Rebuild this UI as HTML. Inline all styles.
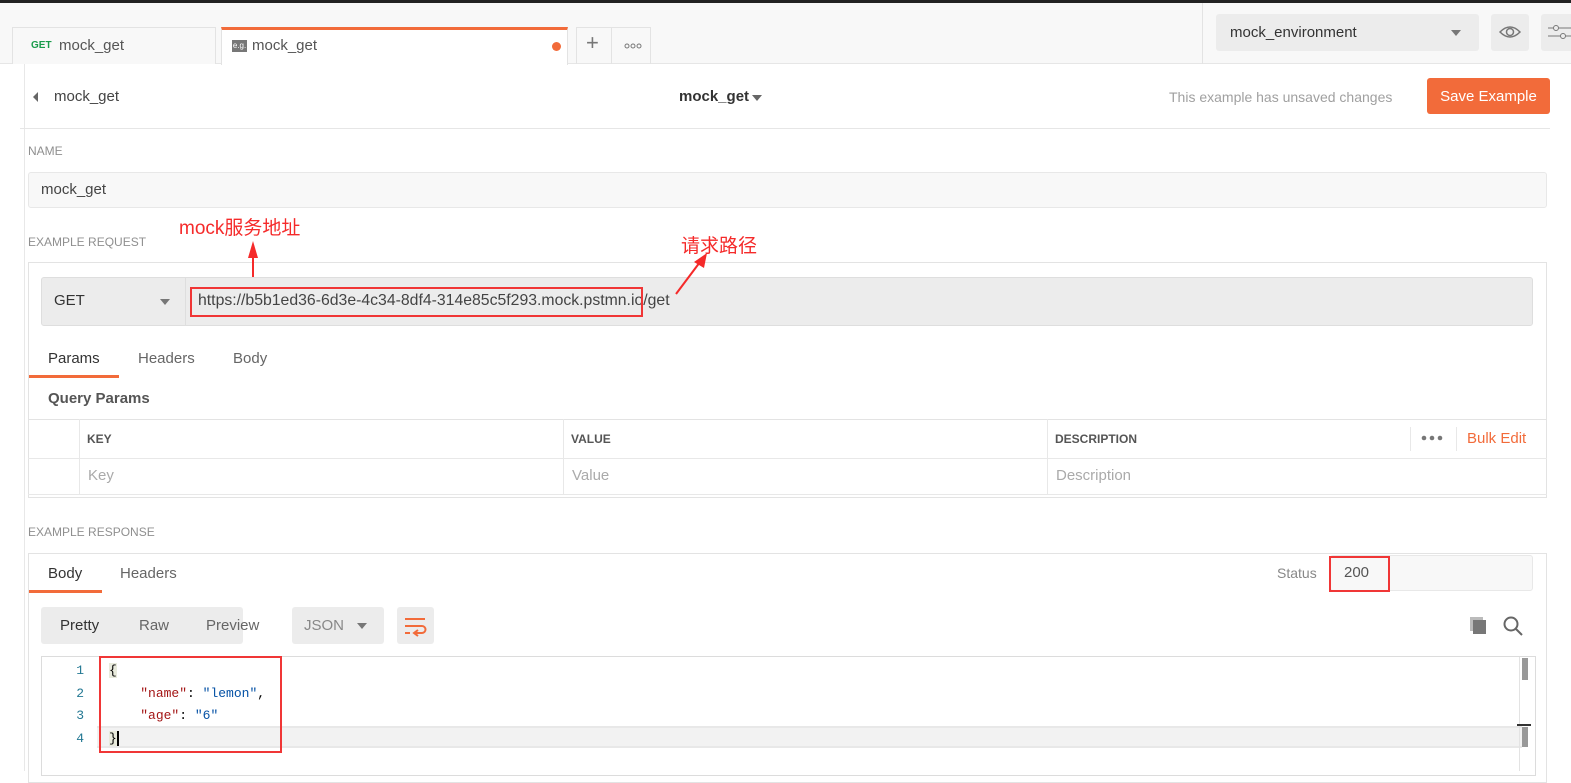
<!DOCTYPE html>
<html><head><meta charset="utf-8"><style>
*{margin:0;padding:0;box-sizing:border-box}
body{width:1571px;height:771px;position:relative;overflow:hidden;background:#fff;font-family:"Liberation Sans","Noto Sans CJK SC",sans-serif;font-size:15px;color:#505050}
.a{position:absolute}
.lbl{font-size:12px;color:#8f8f8f}
.red{border:2px solid #f03636}
.mono{font-family:"Liberation Mono",monospace;font-size:13px}
</style></head><body>
<div class="a" style="left:0;top:0;width:1571px;height:3px;background:#222"></div>
<div class="a" style="left:0;top:3px;width:1571px;height:61px;background:#f8f8f8;border-bottom:1px solid #e6e6e6"></div>
<div class="a" style="left:12px;top:27px;width:204px;height:37px;border:1px solid #e3e3e3;border-bottom:none;background:#f8f8f8"></div>
<div class="a" style="left:31px;top:40px;font-size:10px;font-weight:bold;color:#1a9b4b">GET</div>
<div class="a" style="left:59px;top:37px;font-size:15px;color:#555">mock_get</div>
<div class="a" style="left:221px;top:27px;width:347px;height:38px;background:#fff;border:1px solid #e3e3e3;border-top:3px solid #f26b3a;border-bottom:none"></div>
<div class="a" style="left:232px;top:40px;width:15px;height:12px;background:#777;color:#fff;font-size:8px;line-height:12px;text-align:center">e.g.</div>
<div class="a" style="left:252px;top:37px;font-size:15px;color:#555">mock_get</div>
<div class="a" style="left:552px;top:42px;width:9px;height:9px;border-radius:50%;background:#f26b3a"></div>
<div class="a" style="left:576px;top:27px;width:75px;height:37px;border:1px solid #e3e3e3;border-bottom:none"></div>
<div class="a" style="left:611px;top:27px;width:1px;height:37px;background:#e3e3e3"></div>
<div class="a" style="left:586px;top:30px;font-size:22px;color:#777">+</div>
<svg class="a" style="left:624px;top:43px" width="18" height="6"><circle cx="3" cy="3" r="2" fill="none" stroke="#777"/><circle cx="9" cy="3" r="2" fill="none" stroke="#777"/><circle cx="15" cy="3" r="2" fill="none" stroke="#777"/></svg>
<div class="a" style="left:1202px;top:3px;width:1px;height:61px;background:#e3e3e3"></div>
<div class="a" style="left:1216px;top:14px;width:263px;height:37px;background:#ececec;border-radius:3px"></div>
<div class="a" style="left:1230px;top:24px;font-size:15px;color:#333">mock_environment</div>
<div class="a" style="left:1451px;top:30px;border-left:5px solid transparent;border-right:5px solid transparent;border-top:6px solid #777"></div>
<div class="a" style="left:1491px;top:14px;width:38px;height:37px;background:#ececec;border-radius:3px"></div>
<svg class="a" style="left:1498px;top:22px" width="24" height="20"><path d="M2 10 Q12 0 22 10 Q12 20 2 10Z" fill="none" stroke="#777" stroke-width="1.5"/><circle cx="12" cy="10" r="3.5" fill="none" stroke="#777" stroke-width="1.5"/></svg>
<div class="a" style="left:1541px;top:14px;width:40px;height:37px;background:#ececec;border-radius:3px"></div>
<svg class="a" style="left:1548px;top:22px" width="23" height="20"><path d="M0 6H23M0 14H23" stroke="#777"/><circle cx="8" cy="6" r="2.5" fill="#ececec" stroke="#777"/><circle cx="15" cy="14" r="2.5" fill="#ececec" stroke="#777"/></svg>

<div class="a" style="left:24px;top:64px;width:1px;height:707px;background:#e8e8e8"></div>
<div class="a" style="left:33px;top:92px;border-top:5px solid transparent;border-bottom:5px solid transparent;border-right:5px solid #666"></div>
<div class="a" style="left:54px;top:88px;color:#444">mock_get</div>
<div class="a" style="left:679px;top:88px;color:#333;font-weight:bold">mock_get</div>
<div class="a" style="left:752px;top:95px;border-left:5px solid transparent;border-right:5px solid transparent;border-top:6px solid #666"></div>
<div class="a" style="left:1169px;top:89px;font-size:14px;color:#a0a0a0">This example has unsaved changes</div>
<div class="a" style="left:1427px;top:78px;width:123px;height:36px;background:#f26b3a;border-radius:3px;color:#fff;font-size:15px;display:flex;align-items:center;justify-content:center">Save Example</div>
<div class="a" style="left:20px;top:128px;width:1530px;height:1px;background:#e6e6e6"></div>

<div class="a lbl" style="left:28px;top:144px">NAME</div>
<div class="a" style="left:28px;top:172px;width:1519px;height:36px;background:#f8f8f8;border:1px solid #e8e8e8;border-radius:3px"></div>
<div class="a" style="left:41px;top:181px;color:#444">mock_get</div>
<div class="a lbl" style="left:28px;top:235px">EXAMPLE REQUEST</div>
<div class="a" style="left:179px;top:213px;font-size:19px;color:#f52a2a">mock服务地址</div>
<div class="a" style="left:681px;top:231px;font-size:19px;color:#f52a2a">请求路径</div>

<div class="a" style="left:28px;top:262px;width:1519px;height:236px;border:1px solid #e3e3e3"></div>
<div class="a" style="left:41px;top:277px;width:1492px;height:49px;background:#ececec;border:1px solid #dedede;border-radius:3px"></div>
<div class="a" style="left:185px;top:277px;width:1px;height:49px;background:#dedede"></div>
<div class="a" style="left:54px;top:292px;color:#333">GET</div>
<div class="a" style="left:160px;top:299px;border-left:5px solid transparent;border-right:5px solid transparent;border-top:6px solid #777"></div>
<div class="a" style="left:198px;top:292px;color:#444;font-size:15.8px">https://b5b1ed36-6d3e-4c34-8df4-314e85c5f293.mock.pstmn.io/get</div>
<div class="a red" style="left:190px;top:287px;width:453px;height:30px"></div>
<svg class="a" style="left:0;top:0" width="800" height="320"><path d="M253 277V255" stroke="#f52a2a" stroke-width="2"/><path d="M248 258L253 241L258 258Z" fill="#f52a2a"/><path d="M676 294L700 262" stroke="#f52a2a" stroke-width="2"/><path d="M694 262L707 253L704 268Z" fill="#f52a2a"/></svg>
<div class="a" style="left:48px;top:350px;color:#333">Params</div>
<div class="a" style="left:138px;top:350px;color:#666">Headers</div>
<div class="a" style="left:233px;top:350px;color:#666">Body</div>
<div class="a" style="left:29px;top:375px;width:90px;height:3px;background:#f26b3a"></div>
<div class="a" style="left:48px;top:390px;color:#555;font-weight:bold">Query Params</div>
<div class="a" style="left:28px;top:419px;width:1519px;height:1px;background:#e3e3e3"></div>
<div class="a" style="left:28px;top:458px;width:1519px;height:1px;background:#e8e8e8"></div>
<div class="a" style="left:28px;top:494px;width:1519px;height:1px;background:#e8e8e8"></div>
<div class="a" style="left:79px;top:419px;width:1px;height:76px;background:#e8e8e8"></div>
<div class="a" style="left:563px;top:419px;width:1px;height:76px;background:#e8e8e8"></div>
<div class="a" style="left:1047px;top:419px;width:1px;height:76px;background:#e8e8e8"></div>
<div class="a" style="left:1410px;top:427px;width:1px;height:24px;background:#e8e8e8"></div>
<div class="a" style="left:1456px;top:427px;width:1px;height:24px;background:#e8e8e8"></div>
<div class="a" style="left:87px;top:432px;font-size:12px;font-weight:bold;color:#555">KEY</div>
<div class="a" style="left:571px;top:432px;font-size:12px;font-weight:bold;color:#555">VALUE</div>
<div class="a" style="left:1055px;top:432px;font-size:12px;font-weight:bold;color:#555">DESCRIPTION</div>
<svg class="a" style="left:1421px;top:435px" width="22" height="6"><circle cx="3" cy="3" r="2.3" fill="#777"/><circle cx="11" cy="3" r="2.3" fill="#777"/><circle cx="19" cy="3" r="2.3" fill="#777"/></svg>
<div class="a" style="left:1467px;top:430px;font-size:15px;color:#f26b3a">Bulk Edit</div>
<div class="a" style="left:88px;top:467px;color:#aaa">Key</div>
<div class="a" style="left:572px;top:467px;color:#aaa">Value</div>
<div class="a" style="left:1056px;top:467px;color:#aaa">Description</div>

<div class="a lbl" style="left:28px;top:525px">EXAMPLE RESPONSE</div>
<div class="a" style="left:28px;top:553px;width:1519px;height:230px;border:1px solid #e3e3e3"></div>
<div class="a" style="left:48px;top:565px;color:#333">Body</div>
<div class="a" style="left:120px;top:565px;color:#666">Headers</div>
<div class="a" style="left:29px;top:590px;width:73px;height:3px;background:#f26b3a"></div>
<div class="a" style="left:1277px;top:565px;font-size:14px;color:#888">Status</div>
<div class="a" style="left:1330px;top:555px;width:203px;height:36px;background:#f8f8f8;border:1px solid #e8e8e8;border-radius:3px"></div>
<div class="a" style="left:1344px;top:564px;color:#555">200</div>
<div class="a red" style="left:1329px;top:556px;width:61px;height:36px"></div>

<div class="a" style="left:41px;top:607px;width:202px;height:37px;background:#ececec;border-radius:3px"></div>
<div class="a" style="left:60px;top:617px;color:#333">Pretty</div>
<div class="a" style="left:139px;top:617px;color:#666">Raw</div>
<div class="a" style="left:206px;top:617px;color:#666">Preview</div>
<div class="a" style="left:292px;top:607px;width:92px;height:37px;background:#ececec;border-radius:3px"></div>
<div class="a" style="left:304px;top:617px;color:#888">JSON</div>
<div class="a" style="left:357px;top:623px;border-left:5px solid transparent;border-right:5px solid transparent;border-top:6px solid #777"></div>
<div class="a" style="left:397px;top:607px;width:37px;height:37px;background:#ececec;border-radius:3px"></div>
<svg class="a" style="left:404px;top:615px" width="24" height="22"><path d="M1 4H21M1 11H18A3.5 3.5 0 0 1 18 18H11M1 18H6" fill="none" stroke="#f26b3a" stroke-width="2"/><path d="M14 15L10 18L14 21" fill="none" stroke="#f26b3a" stroke-width="2"/></svg>
<svg class="a" style="left:1469px;top:616px" width="20" height="20"><rect x="1" y="1" width="13" height="14" fill="#bbb"/><rect x="4" y="4" width="13" height="14" fill="#777"/></svg>
<svg class="a" style="left:1502px;top:615px" width="22" height="22"><circle cx="9" cy="9" r="6.5" fill="none" stroke="#666" stroke-width="2"/><path d="M14 14L20 20" stroke="#666" stroke-width="2"/></svg>

<div class="a" style="left:41px;top:656px;width:1495px;height:120px;border:1px solid #dcdcdc"></div>
<div class="a" style="left:97px;top:726px;width:1425px;height:22px;background:#f2f2f2;border-top:2px solid #e8e8e8;border-bottom:2px solid #e8e8e8"></div>
<div class="a" style="left:1519px;top:657px;width:1px;height:114px;background:#e3e3e3"></div>
<div class="a" style="left:1522px;top:658px;width:6px;height:22px;background:#999"></div>
<div class="a" style="left:1517px;top:724px;width:14px;height:2px;background:#333"></div>
<div class="a" style="left:1522px;top:727px;width:6px;height:20px;background:#999"></div>
<div class="a mono" style="left:60px;top:660px;line-height:22.5px;color:#237893;width:24px;text-align:right">1<br>2<br>3<br>4</div>
<div class="a mono" style="left:109px;top:660px;line-height:22.5px;white-space:pre;color:#000"><span style="background:#e8eadc">{</span>
    <span style="color:#a31515">"name"</span>: <span style="color:#0451a5">"lemon"</span>,
    <span style="color:#a31515">"age"</span>: <span style="color:#0451a5">"6"</span>
<span style="background:#e8eadc;border-right:2px solid #000">}</span></div>
<div class="a red" style="left:99px;top:656px;width:183px;height:97px"></div>
</body></html>
